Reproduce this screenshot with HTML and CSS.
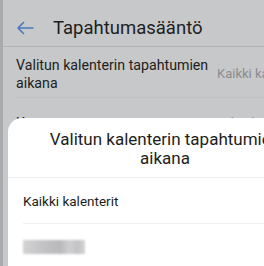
FILE: index.html
```html
<!DOCTYPE html>
<html lang="fi">

<head>
    <meta charset="UTF-8">
    <meta name="viewport" content="width=device-width, initial-scale=1.0">
    <title>Tapahtumasääntö</title>
    <link rel="stylesheet" href="styles.css">
</head>

<body>
    <div class="page">
        <header class="topbar">
            <svg class="back" width="18" height="14" viewBox="0 0 18 14">
                <path d="M17 7H2M7.5 1.5L2 7l5.5 5.5" fill="none" stroke="#4b78bf" stroke-width="1.6" stroke-linecap="round" stroke-linejoin="round"/>
            </svg>
            <h1>Tapahtumasääntö</h1>
        </header>

        <div class="row first">
            <p class="label">Valitun kalenterin tapahtumien aikana</p>
            <p class="value">Kaikki kalenterit</p>
        </div>
        <div class="row">
            <p class="label">Kertaus</p>
            <p class="value">Ei koskaan</p>
        </div>
    </div>

    <div class="sheet">
        <h2>Valitun kalenterin tapahtumien aikana</h2>
        <div class="option">Kaikki kalenterit</div>
        <div class="option"><span class="blurred"></span></div>
    </div>
</body>

</html>
```

FILE: styles.css
```css
* {
    margin: 0;
    padding: 0;
    box-sizing: border-box;
}

body {
    width: 264px;
    height: 266px;
    overflow: hidden;
    position: relative;
    background-color: #c7c8ca;
    border-left: 3px solid #a9aaac;
    font-family: Roboto, "Noto Sans", sans-serif;
    color: #1d1e20;
}

.page {
    width: 330px;
}

.topbar {
    display: flex;
    align-items: center;
    height: 47px;
    padding: 9px 0 0 13px;
    border-bottom: 1px solid #b3b4b6;
}

.back {
    margin-right: 19px;
}

.topbar h1 {
    font-size: 18.5px;
    font-weight: 400;
}

.row {
    display: flex;
    align-items: center;
    height: 50px;
    margin-left: 13px;
    border-bottom: 1px solid #bfc0c2;
}

.row.first {
    height: 51px;
    padding-top: 3px;
}

.label {
    width: 201px;
    font-size: 14.2px;
    line-height: 18px;
}

.value {
    font-size: 13px;
    color: #8b8c8e;
    white-space: nowrap;
}

.sheet {
    position: absolute;
    top: 118px;
    left: 5px;
    width: 314px;
    height: 170px;
    background-color: white;
    border-radius: 14px 14px 0 0;
}

.sheet h2 {
    font-size: 17px;
    font-weight: 400;
    line-height: 19px;
    text-align: center;
    padding: 12px 40px 9px;
    border-bottom: 1px solid #ededed;
}

.option {
    display: flex;
    align-items: center;
    height: 46px;
    margin-left: 15px;
    font-size: 13.5px;
    border-bottom: 1px solid #f1f1f1;
}

.blurred {
    width: 62px;
    height: 14px;
    background: linear-gradient(90deg, #d3d3d5 0%, #c4c4c6 30%, #b9b9bb 60%, #cfcfd1 75%, #c2c2c4 88%, #d5d5d7 100%);
    filter: blur(1px);
}
```
